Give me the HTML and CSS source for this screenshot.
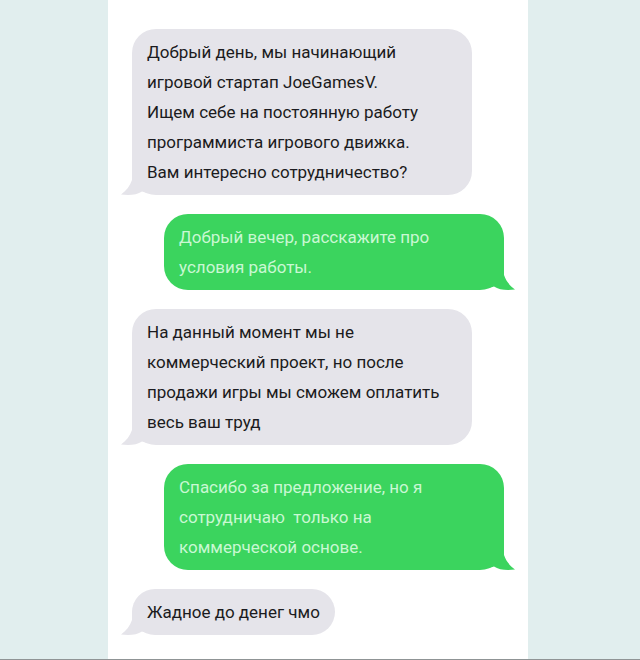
FILE: index.html
```html
<!DOCTYPE html>
<html lang="ru">
<head>
    <meta charset="UTF-8">
    <meta name="viewport" content="width=device-width, initial-scale=1.0">
    <title>Переписка</title>
    <link rel="stylesheet" href="styles.css">
</head>
<body>
    <main class="chat">
        <div class="message received">
            <p>Добрый день, мы начинающий<br>игровой стартап JoeGamesV.<br>Ищем себе на постоянную работу<br>программиста игрового движка.<br>Вам интересно сотрудничество?</p>
            <svg class="tail" viewBox="0 0 30 26" aria-hidden="true">
                <path d="M11 0 L11 11 C9 17 5 22 0 25.500 C8 26.500 16 26 21 22.500 L26 24 L30 24 L30 0 Z"/>
            </svg>
        </div>
        <div class="message sent">
            <p>Добрый вечер, расскажите про<br>условия работы.</p>
            <svg class="tail" viewBox="0 0 30 26" aria-hidden="true">
                <path d="M11 0 L11 11 C9 17 5 22 0 25.500 C8 26.500 16 26 21 22.500 L26 24 L30 24 L30 0 Z"/>
            </svg>
        </div>
        <div class="message received">
            <p>На данный момент мы не<br>коммерческий проект, но после<br>продажи игры мы сможем оплатить<br>весь ваш труд</p>
            <svg class="tail" viewBox="0 0 30 26" aria-hidden="true">
                <path d="M11 0 L11 11 C9 17 5 22 0 25.500 C8 26.500 16 26 21 22.500 L26 24 L30 24 L30 0 Z"/>
            </svg>
        </div>
        <div class="message sent">
            <p>Спасибо за предложение, но я<br>сотрудничаю&nbsp; только на<br>коммерческой основе.</p>
            <svg class="tail" viewBox="0 0 30 26" aria-hidden="true">
                <path d="M11 0 L11 11 C9 17 5 22 0 25.500 C8 26.500 16 26 21 22.500 L26 24 L30 24 L30 0 Z"/>
            </svg>
        </div>
        <div class="message received short">
            <p>Жадное до денег чмо</p>
            <svg class="tail" viewBox="0 0 30 26" aria-hidden="true">
                <path d="M11 2 L11 11 C9 17 5 22 0 25.500 C8 26.500 16 26 21 22.500 L26 24 L30 24 L30 2 Z"/>
            </svg>
        </div>
    </main>
</body>
</html>
```
FILE: styles.css
```css
* {
    box-sizing: border-box;
}
body {
    display: grid;
    grid-template-columns: 27fr 105fr 28fr;
    min-height: 100vh;
    margin: 0;
    background-color: #e1eeee;
    border-bottom: 1px solid #8f9495;
    font-family: Roboto, sans-serif;
    font-size: 17px;
    line-height: 30px;
}
.chat {
    grid-column: 2;
    display: flex;
    flex-direction: column;
    gap: 19px;
    padding: 29px 24px 24px;
    background: white;
}
.message {
    position: relative;
    width: 340px;
    max-width: 100%;
    padding: 8px 15px;
    border-radius: 24px;
}
.message p {
    position: relative;
    z-index: 1;
    margin: 0;
}
.received {
    align-self: flex-start;
    background: #e5e4ea;
    color: #1b1b20;
    fill: #e5e4ea;
}
.sent {
    align-self: flex-end;
    background: #3bd45e;
    color: #c9f8d3;
    fill: #3bd45e;
}
.short {
    width: auto;
}
.tail {
    position: absolute;
    left: -11px;
    bottom: 0;
    width: 30px;
    height: 26px;
}
.sent .tail {
    left: auto;
    right: -11px;
    transform: scaleX(-1);
}
```
